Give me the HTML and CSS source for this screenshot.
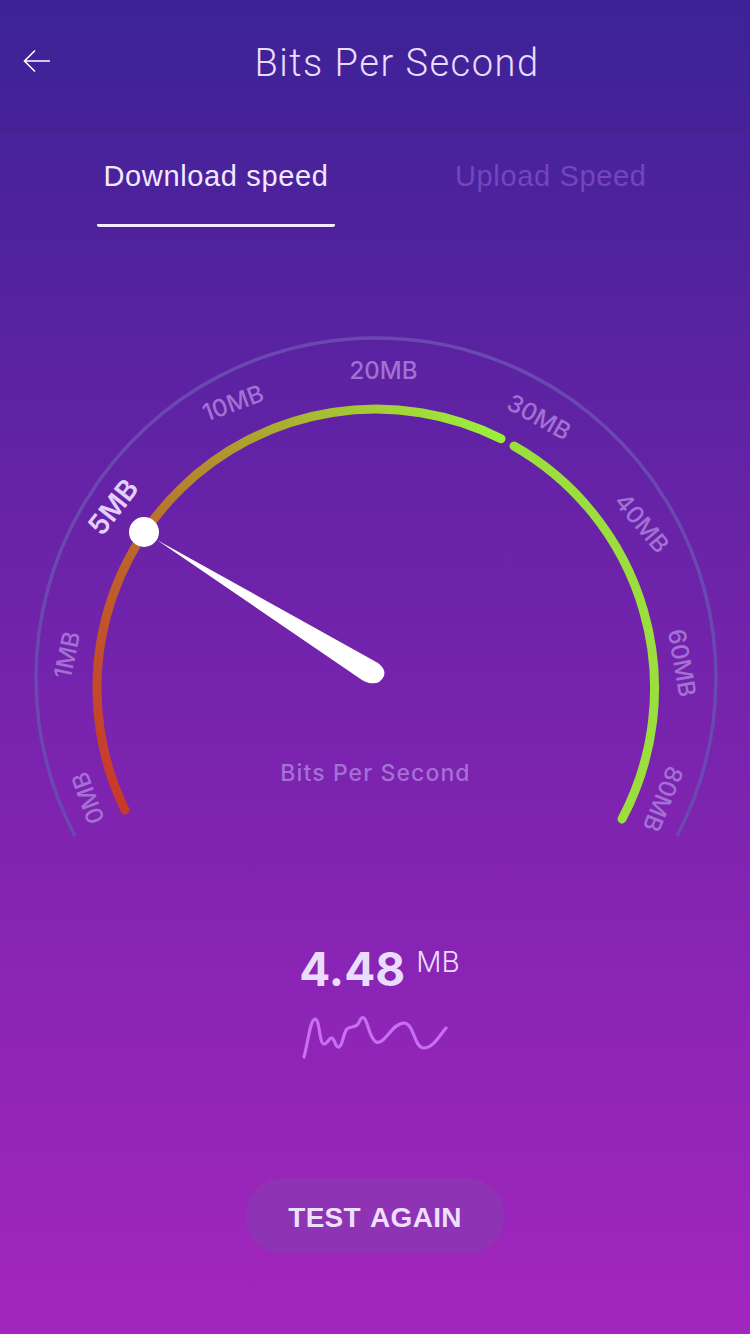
FILE: index.html
```html
<!DOCTYPE html>
<html lang="en">
<head>
    <meta charset="UTF-8">
    <meta name="viewport" content="width=device-width, initial-scale=1.0">
    <title>Bits Per Second</title>
    <link rel="stylesheet" href="styles.css">
</head>
<body>
    <header class="topbar">
        <svg class="back" width="28" height="24" viewBox="0 0 28 24">
            <path d="M27 12H2M12 1.500L1.500 12L12 22.500" fill="none" stroke="#fff" stroke-width="1.600"/>
        </svg>
        <h1>Bits Per Second</h1>
    </header>

    <nav class="tabs">
        <div class="tab active">Download speed</div>
        <div class="tab">Upload Speed</div>
    </nav>

    <!-- gauge: viewBox uses page coordinates -->
    <svg class="gauge" width="750" height="620" viewBox="0 230 750 620">
        <defs>
            <linearGradient id="arcGrad" gradientUnits="userSpaceOnUse" x1="125" y1="810" x2="502" y2="437">
                <stop offset="0" stop-color="#c9392a"/>
                <stop offset="0.39" stop-color="#bb6a2b"/>
                <stop offset="0.87" stop-color="#a4ce33"/>
                <stop offset="1" stop-color="#9bf03c"/>
            </linearGradient>
        </defs>
        <path class="rim" d="M75 836A340 340 0 1 1 677 836"/>
        <path class="arc" stroke="url(#arcGrad)" d="M125 810A279 279 0 0 1 501 438.700"/>
        <path class="arc" stroke="#9bdf3d" d="M514 446A279 279 0 0 1 622 819"/>

        <text class="tick" transform="translate(88 798) rotate(-110)">0MB</text>
        <text class="tick" transform="translate(67 655) rotate(-78)">1MB</text>
        <text class="tick now" transform="translate(113 507) rotate(-52)">5MB</text>
        <text class="tick" transform="translate(233 403) rotate(-20)">10MB</text>
        <text class="tick" transform="translate(383.500 370)">20MB</text>
        <text class="tick" transform="translate(539 417) rotate(29)">30MB</text>
        <text class="tick" transform="translate(642 523) rotate(50)">40MB</text>
        <text class="tick" transform="translate(682 663) rotate(80)">60MB</text>
        <text class="tick" transform="translate(663 799) rotate(112)">80MB</text>

        <path class="needle" d="M157 540L378 663Q386 669 384 676Q380 685 369 683Q365 682 362 680Z"/>
        <circle class="needle" cx="144" cy="532" r="15"/>
        <text class="unit-label" x="375.500" y="773">Bits Per Second</text>
    </svg>

    <section class="reading">
        <div class="value"><span class="num">4.48</span><span class="mb">MB</span></div>
        <svg class="spark" width="150" height="50" viewBox="300 1012 150 50">
            <path d="M304 1056C308 1042 310 1019 315 1018C320 1018 319 1043 324 1043C328 1043 329 1036 332 1037C335 1038 335 1047 339 1046C343 1045 343 1032 347 1028C350 1025 355 1027 358 1023C360 1020 361 1015 364 1017C368 1020 369 1037 376 1041C384 1045 392 1022 404 1022C414 1022 414 1047 424 1047C433 1047 440 1034 446 1027"/>
        </svg>
    </section>

    <button class="again" type="button">TEST AGAIN</button>
</body>
</html>
```

FILE: styles.css
```css
body{
    margin: 0;
    width: 750px;
    height: 1334px;
    overflow: hidden;
    background: linear-gradient(180deg, #3c2296 0%, #6f23aa 45%, #a326be 100%);
    font-family: "Liberation Sans", Arial, sans-serif;
    color: #e9dcfd;
}

.topbar{
    height: 128px;
    display: flex;
    align-items: center;
    border-bottom: 2px solid #4c1f8e;
}
.topbar h1{
    margin: 0 7px 2px 0;
    flex: 1;
    text-align: center;
    font-family: Roboto, sans-serif;
    font-size: 38px;
    font-weight: 350;
    letter-spacing: 1.500px;
    line-height: 1;
}
.back{
    margin: 0 0 6px 23px;
}

.tabs{
    height: 96px;
    display: flex;
    border-bottom: 2px solid #4f1f93;
}
.tab{
    font-size: 29px;
    line-height: 92px;
    text-align: center;
    color: #7445bd;
    letter-spacing: 0.650px;
}
.tab:first-child{
    margin-left: 97px;
    width: 238px;
    height: 97px;
    box-sizing: border-box;
    color: #f2e9ff;
    border-bottom: 3px solid #f4ecff;
    border-radius: 0 0 2px 2px;
}
.tab:last-child{
    margin-left: 120px;
}

.gauge{
    display: block;
    margin-top: 2px;
}
.rim{
    fill: none;
    stroke: #6a48b2;
    stroke-width: 3.500;
}
.arc{
    fill: none;
    stroke-width: 9;
    stroke-linecap: round;
}
.tick{
    font-family: Inter, sans-serif;
    font-size: 24px;
    font-weight: 500;
    fill: #a271d3;
    text-anchor: middle;
    dominant-baseline: central;
}
.tick.now{
    font-size: 28px;
    font-weight: 600;
    fill: #e2cffc;
}
.needle{
    fill: #fff;
}
.unit-label{
    font-family: Inter, sans-serif;
    font-size: 23px;
    font-weight: 500;
    letter-spacing: 1.100px;
    fill: #a56fd6;
    text-anchor: middle;
    dominant-baseline: central;
}

.reading{
    margin-top: 89px;
    display: flex;
    flex-direction: column;
    align-items: center;
}
.value{
    display: flex;
    align-items: flex-start;
    height: 60px;
    margin-left: 9px;
    font-family: Inter, sans-serif;
}
.num{
    font-size: 46px;
    font-weight: 700;
    line-height: 60px;
}
.mb{
    font-size: 28px;
    font-weight: 300;
    margin: 6px 0 0 11px;
}
.spark{
    display: block;
    margin-top: 14px;
}
.spark path{
    fill: none;
    stroke: #c86ff0;
    stroke-width: 3.200;
    stroke-linecap: round;
}

.again{
    display: block;
    width: 260px;
    height: 76px;
    margin: 115px auto 0;
    padding: 3px 0 0;
    border: none;
    border-radius: 38px;
    background: #8f33b5;
    color: #eddffe;
    font-family: inherit;
    font-size: 28px;
    font-weight: 700;
    letter-spacing: 0.300px;
    word-spacing: 2px;
}
```
